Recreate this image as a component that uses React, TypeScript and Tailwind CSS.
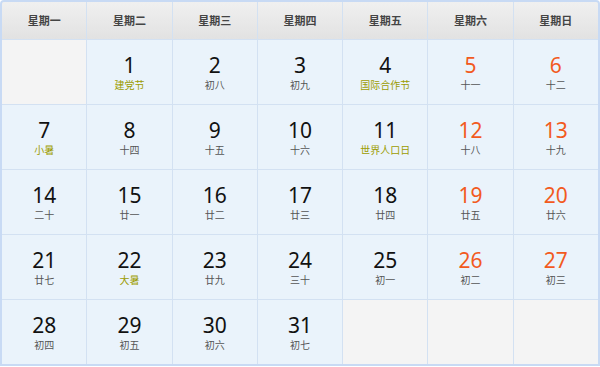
import React from "react";

type Day = { d?: number; l?: string; fest?: boolean; wk?: boolean };

const heads = ["星期一", "星期二", "星期三", "星期四", "星期五", "星期六", "星期日"];

const days: Day[] = [
  {},
  { d: 1, l: "建党节", fest: true },
  { d: 2, l: "初八" },
  { d: 3, l: "初九" },
  { d: 4, l: "国际合作节", fest: true },
  { d: 5, l: "十一", wk: true },
  { d: 6, l: "十二", wk: true },
  { d: 7, l: "小暑", fest: true },
  { d: 8, l: "十四" },
  { d: 9, l: "十五" },
  { d: 10, l: "十六" },
  { d: 11, l: "世界人口日", fest: true },
  { d: 12, l: "十八", wk: true },
  { d: 13, l: "十九", wk: true },
  { d: 14, l: "二十" },
  { d: 15, l: "廿一" },
  { d: 16, l: "廿二" },
  { d: 17, l: "廿三" },
  { d: 18, l: "廿四" },
  { d: 19, l: "廿五", wk: true },
  { d: 20, l: "廿六", wk: true },
  { d: 21, l: "廿七" },
  { d: 22, l: "大暑", fest: true },
  { d: 23, l: "廿九" },
  { d: 24, l: "三十" },
  { d: 25, l: "初一" },
  { d: 26, l: "初二", wk: true },
  { d: 27, l: "初三", wk: true },
  { d: 28, l: "初四" },
  { d: 29, l: "初五" },
  { d: 30, l: "初六" },
  { d: 31, l: "初七" },
  {},
  {},
  {},
];

const Cell: React.FC<{ day: Day }> = ({ day }) => {
  if (!day.d) return <div className="h-[64px] bg-[#f4f4f4]" />;
  return (
    <div className="h-[64px] bg-[#eaf3fb] flex flex-col items-center pt-[15px]">
      <span
        className={`text-[21px] leading-[21px] font-['Noto_Sans','DejaVu_Sans',sans-serif] ${
          day.wk ? "text-[#f25a1e]" : "text-[#111]"
        }`}
      >
        {day.d}
      </span>
      <span
        className={`text-[10px] leading-[12px] mt-[3px] ${
          day.fest ? "text-[#9c9c00]" : "text-[#555]"
        }`}
      >
        {day.l}
      </span>
    </div>
  );
};

export default function App() {
  return (
    <div className="w-[600px] h-[367px] bg-white font-['Noto_Sans_CJK_SC',sans-serif]">
      <div className="border-[2px] border-[#c8daf4] rounded-t-[4px] overflow-hidden bg-[#d3e1f2]">
        <div className="grid grid-cols-7 gap-px">
          {heads.map((h) => (
            <div
              key={h}
              className="h-[37px] bg-gradient-to-b from-[#f0f0f0] to-[#e2e2e2] flex items-center justify-center text-[11px] font-bold text-[#444]"
            >
              {h}
            </div>
          ))}
          {days.map((day, i) => (
            <Cell key={i} day={day} />
          ))}
        </div>
      </div>
    </div>
  );
}
